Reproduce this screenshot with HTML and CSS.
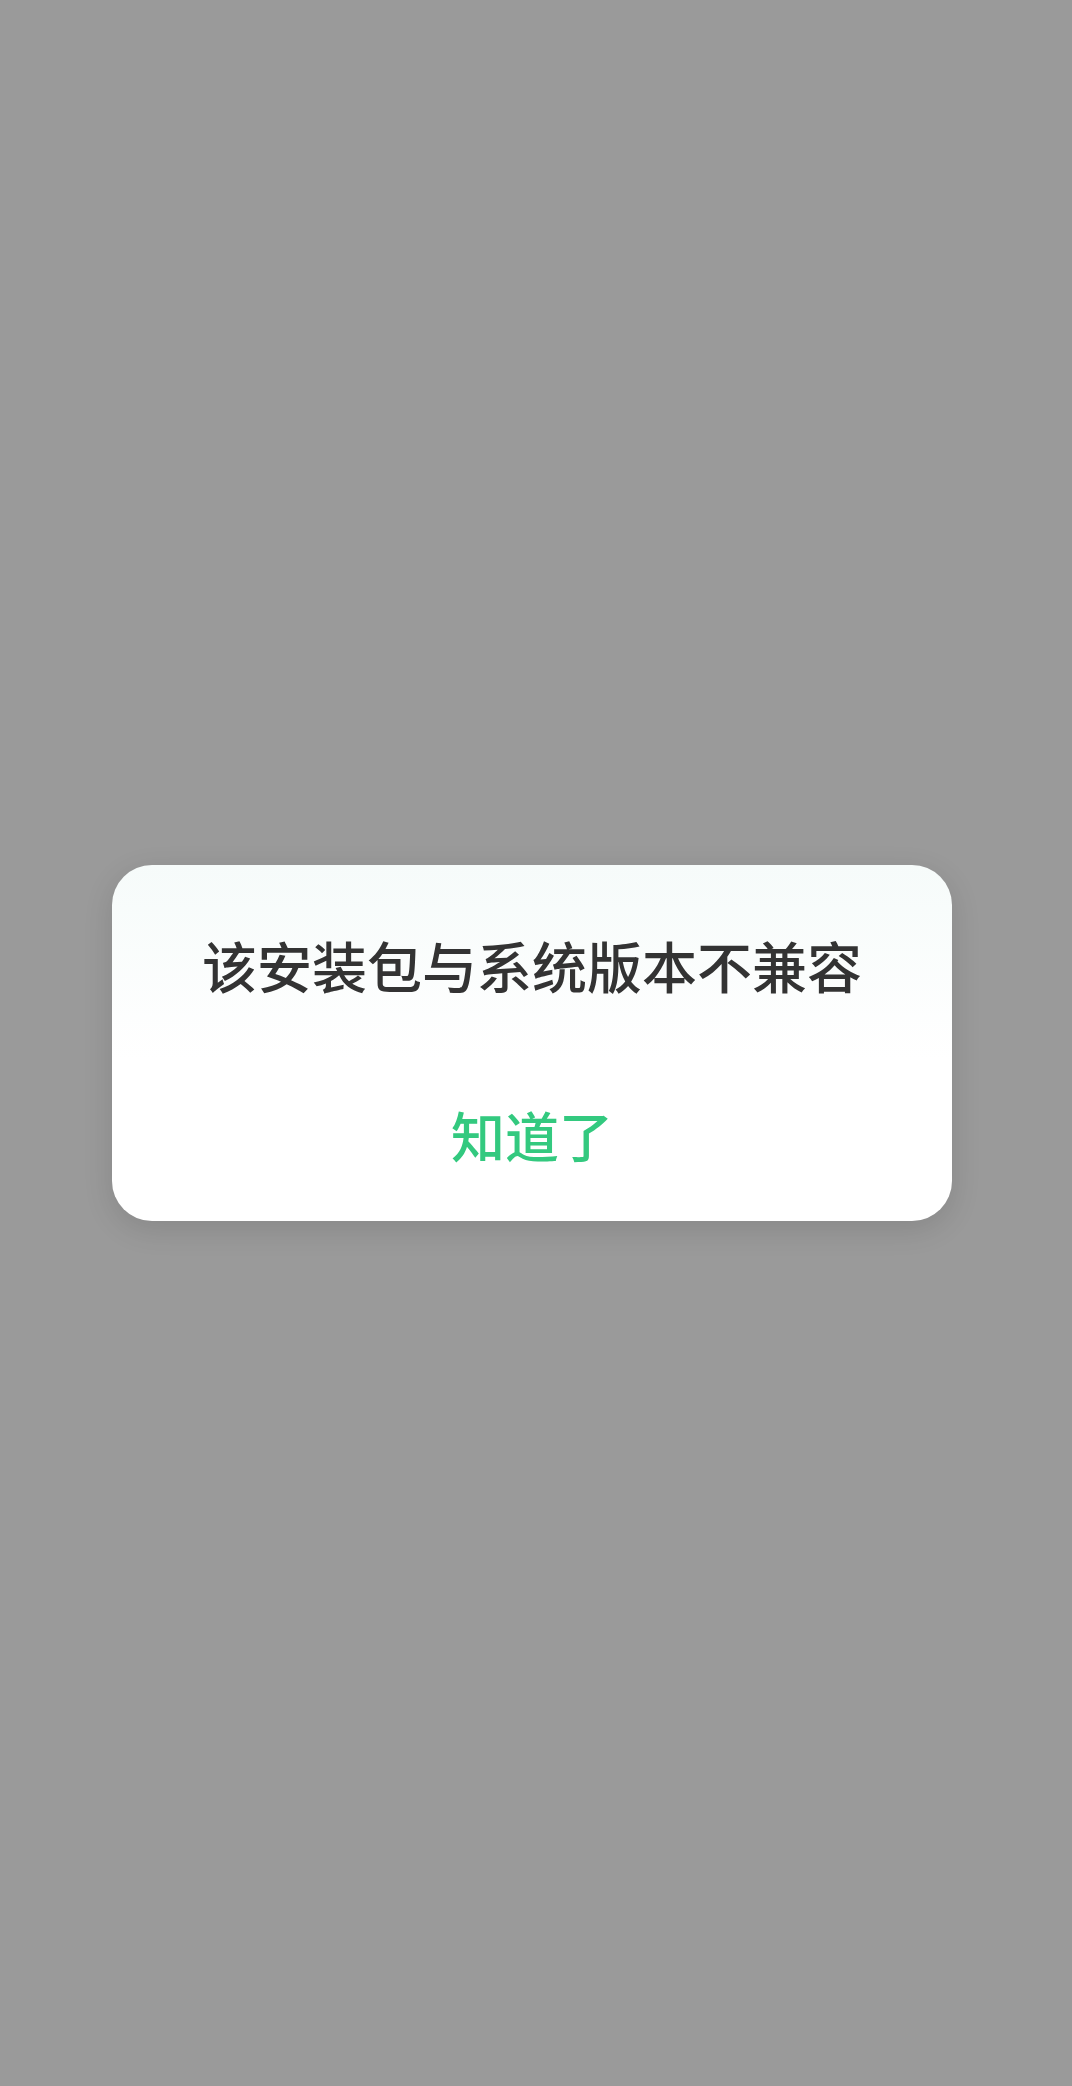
FILE: index.html
```html
<!DOCTYPE html>
<html lang="zh-CN">
<head>
<meta charset="utf-8">
<title>提示</title>
<link rel="stylesheet" href="styles.css">
</head>
<body>
<div class="overlay">
  <div class="dialog">
    <div class="title">该安装包与系统版本不兼容</div>
    <div class="action">知道了</div>
  </div>
</div>
</body>
</html>
```
FILE: styles.css
```css
html, body {
  margin: 0;
  padding: 0;
}
body {
  background: #9a9a9a;
  font-family: "Noto Sans CJK SC", "Noto Sans", sans-serif;
}
.overlay {
  height: 2086px;
  box-sizing: border-box;
  padding: 865px 120px 0 112px;
}
.dialog {
  width: 840px;
  height: 356px;
  box-sizing: border-box;
  border-radius: 40px;
  background: linear-gradient(180deg, #f6fbfa 0%, #ffffff 55%, #ffffff 100%);
  box-shadow: 0 8px 30px rgba(0, 0, 0, 0.12);
  padding-top: 72px;
  display: flex;
  flex-direction: column;
  align-items: center;
  gap: 116px;
}
.title {
  font-size: 55px;
  line-height: 55px;
  color: #333333;
  font-weight: 500;
}
.action {
  font-size: 54px;
  line-height: 54px;
  color: #33c97f;
  font-weight: 500;
}
```
